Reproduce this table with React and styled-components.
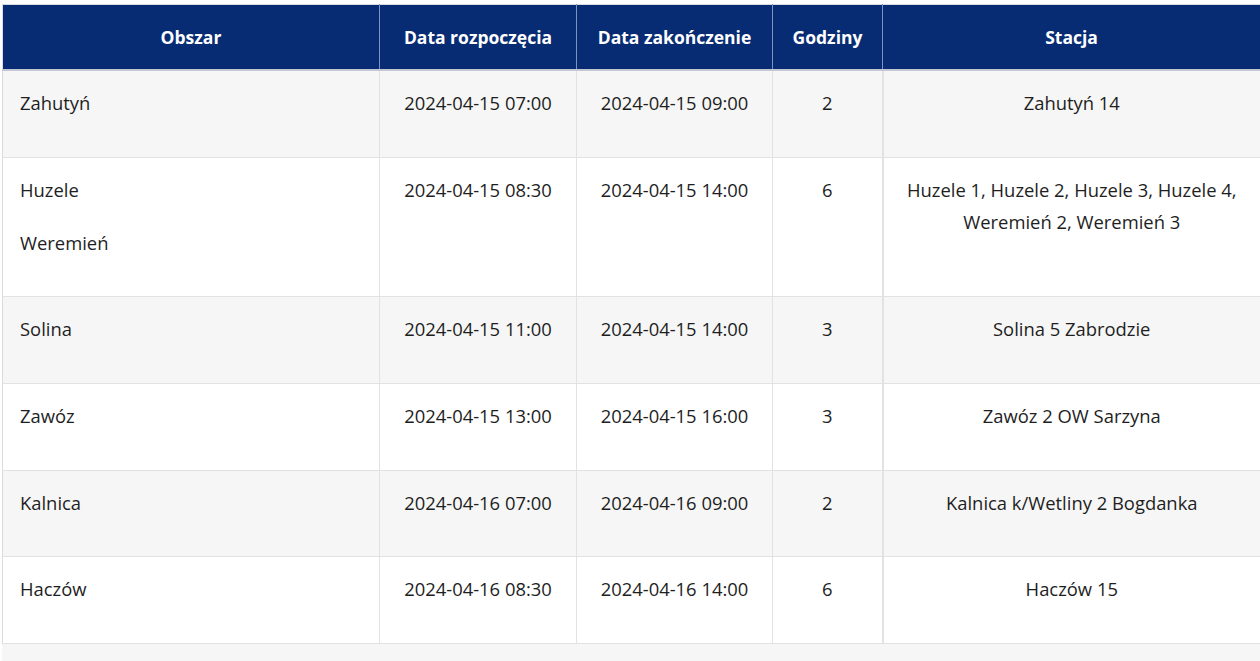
import React from "react";
import styled, { createGlobalStyle } from "styled-components";

const Global = createGlobalStyle`
  html, body { margin: 0; padding: 0; background: #ffffff; }
  body { font-family: "Open Sans", "Noto Sans", sans-serif; overflow: hidden; }
`;

const Page = styled.div`
  padding: 4px 0 0 2px;
  width: 1400px;
`;

const Table = styled.table`
  border-collapse: collapse;
  table-layout: fixed;
  width: 1258px;
  border-left: 1px solid #d9dbe3;
  border-top: 1px solid #d9dbe3;
`;

const HeadCell = styled.th`
  background: #082c74;
  color: #ffffff;
  font-weight: 700;
  font-size: 17.5px;
  height: 64px;
  padding: 0 12px;
  text-align: center;
  vertical-align: middle;
  border-right: 1px solid #7f92bd;
  border-bottom: 2px solid #c3c7d3;
  white-space: nowrap;
`;

const Row = styled.tr`
  background: ${(p) => (p.$alt ? "#f6f6f6" : "#ffffff")};
`;

const Cell = styled.td`
  padding: 16px 15px 16.7px ${(p) => (p.$align === "left" ? "17px" : "15px")};
  vertical-align: top;
  text-align: ${(p) => (p.$align === "left" ? "left" : "center")};
  color: #1e1e1e;
  font-size: 18.4px;
  border-right: ${(p) => (p.$thick ? "2px" : "1px")} solid #e2e2e2;
  border-bottom: 1px solid #e2e2e2;
`;

const Line = styled.p`
  margin: 0 0 21px;
  line-height: 32px;
`;

const Footer = styled.div`
  width: 1258px;
  height: 40px;
  background: #f6f6f6;
`;

const rows = [
  { area: ["Zahutyń"], start: "2024-04-15 07:00", end: "2024-04-15 09:00", h: "2", st: "Zahutyń 14" },
  {
    area: ["Huzele", "Weremień"],
    start: "2024-04-15 08:30",
    end: "2024-04-15 14:00",
    h: "6",
    st: "Huzele 1, Huzele 2, Huzele 3, Huzele 4, Weremień 2, Weremień 3",
  },
  { area: ["Solina"], start: "2024-04-15 11:00", end: "2024-04-15 14:00", h: "3", st: "Solina 5 Zabrodzie" },
  { area: ["Zawóz"], start: "2024-04-15 13:00", end: "2024-04-15 16:00", h: "3", st: "Zawóz 2 OW Sarzyna" },
  { area: ["Kalnica"], start: "2024-04-16 07:00", end: "2024-04-16 09:00", h: "2", st: "Kalnica k/Wetliny 2 Bogdanka" },
  { area: ["Haczów"], start: "2024-04-16 08:30", end: "2024-04-16 14:00", h: "6", st: "Haczów 15" },
];

export default function App() {
  return (
    <>
      <Global />
      <Page>
        <Table>
          <colgroup>
            <col style={{ width: 377 }} />
            <col style={{ width: 197 }} />
            <col style={{ width: 196 }} />
            <col style={{ width: 110 }} />
            <col style={{ width: 378 }} />
          </colgroup>
          <thead>
            <tr>
              <HeadCell>Obszar</HeadCell>
              <HeadCell>Data rozpoczęcia</HeadCell>
              <HeadCell>Data zakończenie</HeadCell>
              <HeadCell>Godziny</HeadCell>
              <HeadCell>Stacja</HeadCell>
            </tr>
          </thead>
          <tbody>
            {rows.map((r, i) => (
              <Row key={i} $alt={i % 2 === 0}>
                <Cell $align="left">
                  {r.area.map((a) => (
                    <Line key={a}>{a}</Line>
                  ))}
                </Cell>
                <Cell>
                  <Line>{r.start}</Line>
                </Cell>
                <Cell>
                  <Line>{r.end}</Line>
                </Cell>
                <Cell $thick>
                  <Line>{r.h}</Line>
                </Cell>
                <Cell>
                  <Line>{r.st}</Line>
                </Cell>
              </Row>
            ))}
          </tbody>
        </Table>
        <Footer />
      </Page>
    </>
  );
}
